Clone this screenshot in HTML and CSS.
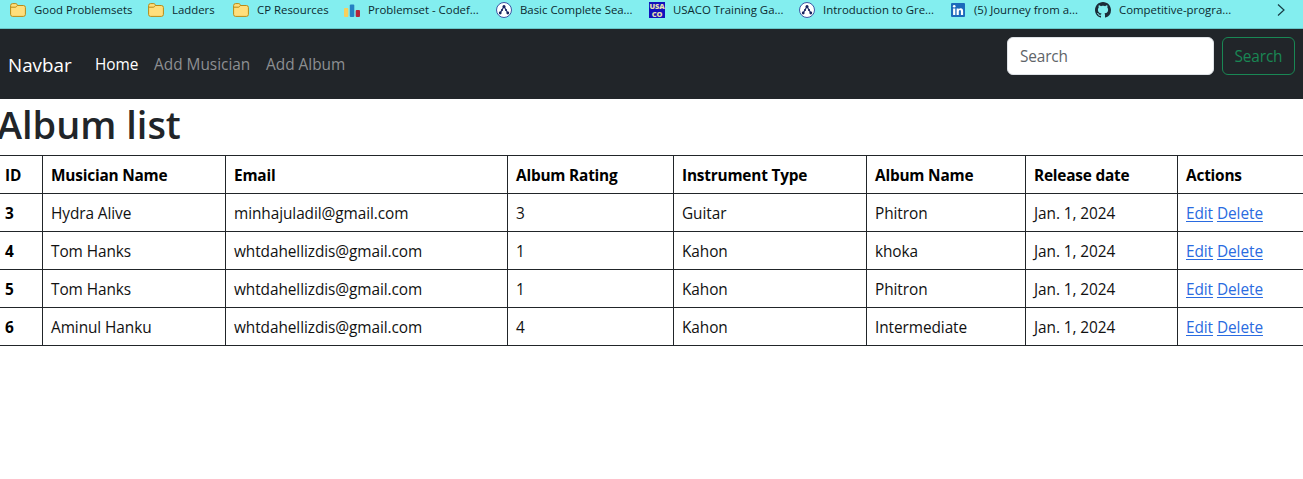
FILE: index.html
```html
<!DOCTYPE html>
<html lang="en">
<head>
<meta charset="utf-8">
<title>Album list</title>
<link rel="stylesheet" href="styles.css">
</head>
<body>
<svg class="defs" width="0" height="0">
  <symbol id="folder" viewBox="0 0 16 14"><path d="M.6 2.6q0-2 2-2h3.2q1 0 1.3 1l.3.9h6q2 0 2 2v6.900q0 2-2 2H2.600q-2 0-2-2z" fill="#ffdf7c" stroke="#b98a16"/><path d="M.8 4.200h4.400q1 0 1.500-.8l.7-.9" fill="none" stroke="#b98a16"/></symbol>
  <symbol id="graph" viewBox="0 0 16 16"><circle cx="8" cy="8" r="7.500" fill="#fff" stroke="#3d55a5"/><path d="M4.200 11 8 4.500 11.800 11" fill="none" stroke="#2b3674" stroke-width="1.300"/><g fill="#17235e"><circle cx="8" cy="4.500" r="1.500"/><circle cx="6" cy="8" r="1"/><circle cx="10" cy="8" r="1"/><circle cx="4.200" cy="11" r="1.400"/><circle cx="11.800" cy="11" r="1.400"/></g></symbol>
</svg>
<nav class="bookmarks">
  <a class="bookmark"><svg class="folder"><use href="#folder"/></svg><span>Good Problemsets</span></a>
  <a class="bookmark"><svg class="folder"><use href="#folder"/></svg><span>Ladders</span></a>
  <a class="bookmark"><svg class="folder"><use href="#folder"/></svg><span>CP Resources</span></a>
  <a class="bookmark"><svg class="icon" viewBox="0 0 16 16"><rect y="6" width="4.300" height="9" rx="1" fill="#f8cf5c"/><rect x="5.800" y="2.500" width="4.500" height="12.500" rx="1" fill="#2580c3"/><rect x="11.700" y="8" width="4.300" height="7" rx="1" fill="#b5243a"/></svg><span>Problemset - Codef...</span></a>
  <a class="bookmark"><svg class="icon"><use href="#graph"/></svg><span>Basic Complete Sea...</span></a>
  <a class="bookmark"><span class="icon usaco"><b>USA</b><b>CO</b></span><span>USACO Training Ga...</span></a>
  <a class="bookmark"><svg class="icon"><use href="#graph"/></svg><span>Introduction to Gre...</span></a>
  <a class="bookmark"><svg class="icon" viewBox="0 0 16 16"><rect x="1" y="1" width="14" height="14" rx="1" fill="#1c69bb"/><g fill="#fff"><circle cx="4.200" cy="4.200" r="1.300"/><path d="M3.100 6.400h2.200V13H3.100zM6.600 6.400h2.100v.9q.7-1.100 2.100-1.100 2.300 0 2.300 2.900V13h-2.200V9.500q0-1.400-1-1.400-1.100 0-1.100 1.500V13H6.600z"/></g></svg><span>(5) Journey from a...</span></a>
  <a class="bookmark"><svg class="icon" viewBox="0 0 16 16"><path fill="#1b2c38" d="M8 0C3.580 0 0 3.580 0 8c0 3.540 2.290 6.530 5.470 7.590.4.070.55-.17.55-.38 0-.19-.01-.82-.01-1.490-2.010.37-2.530-.49-2.690-.94-.09-.23-.48-.94-.82-1.130-.28-.15-.68-.52-.01-.53.63-.01 1.080.58 1.230.82.72 1.210 1.870.87 2.330.66.07-.52.28-.87.51-1.070-1.780-.2-3.640-.89-3.640-3.950 0-.87.31-1.590.82-2.150-.08-.2-.36-1.020.08-2.120 0 0 .67-.21 2.200.82.64-.18 1.320-.27 2-.27s1.360.09 2 .27c1.530-1.040 2.200-.82 2.200-.82.44 1.100.16 1.920.08 2.120.51.56.82 1.270.82 2.150 0 3.070-1.870 3.750-3.650 3.950.29.25.54.73.54 1.480 0 1.070-.01 1.930-.01 2.200 0 .21.15.46.55.38A8.010 8.010 0 0 0 16 8c0-4.420-3.580-8-8-8z"/></svg><span>Competitive-progra...</span></a>
  <svg class="more" viewBox="0 0 8 12"><path d="M1 .5 7 6 1 11.500" fill="none" stroke="#173c44" stroke-width="1.200"/></svg>
</nav>
<header class="navbar">
  <a class="brand">Navbar</a>
  <div class="links"><a class="active">Home</a><a class="musician">Add Musician</a><a>Add Album</a></div>
  <form class="search"><input type="search" placeholder="Search"><button type="button">Search</button></form>
</header>
<main>
  <h1>Album list</h1>
  <table>
    <colgroup><col class="c1"><col class="c2"><col class="c3"><col class="c4"><col class="c5"><col class="c6"><col class="c7"><col class="c8"></colgroup>
    <thead><tr><th>ID</th><th>Musician Name</th><th>Email</th><th>Album Rating</th><th>Instrument Type</th><th>Album Name</th><th>Release date</th><th>Actions</th></tr></thead>
    <tbody>
      <tr><th>3</th><td>Hydra Alive</td><td>minhajuladil@gmail.com</td><td>3</td><td>Guitar</td><td>Phitron</td><td>Jan. 1, 2024</td><td><a href="#">Edit</a> <a href="#">Delete</a></td></tr>
      <tr><th>4</th><td>Tom Hanks</td><td>whtdahellizdis@gmail.com</td><td>1</td><td>Kahon</td><td>khoka</td><td>Jan. 1, 2024</td><td><a href="#">Edit</a> <a href="#">Delete</a></td></tr>
      <tr><th>5</th><td>Tom Hanks</td><td>whtdahellizdis@gmail.com</td><td>1</td><td>Kahon</td><td>Phitron</td><td>Jan. 1, 2024</td><td><a href="#">Edit</a> <a href="#">Delete</a></td></tr>
      <tr><th>6</th><td>Aminul Hanku</td><td>whtdahellizdis@gmail.com</td><td>4</td><td>Kahon</td><td>Intermediate</td><td>Jan. 1, 2024</td><td><a href="#">Edit</a> <a href="#">Delete</a></td></tr>
    </tbody>
  </table>
</main>
</body>
</html>
```
FILE: styles.css
```css
* { box-sizing: border-box; }
body { margin: 0; background: #fff; color: #212529; font: 15.4px/24px "Open Sans", "Noto Sans", sans-serif; overflow: hidden; }
.defs { display: block; }
.bookmarks { display: grid; grid-template-columns: 138px 85px 111px 152px 153px 150px 151px 145px 182px 8px; height: 29px; padding: 0 0 9px 10px; align-items: center; background: #83eeef; border-bottom: 1px solid #67c5c8; color: #0b2a30; font-size: 11.4px; line-height: 18px; white-space: nowrap; }
.bookmark { display: flex; align-items: center; gap: 8px; }
.folder { width: 16px; height: 14px; }
.icon { width: 16px; height: 16px; flex: none; }
.usaco { display: flex; flex-direction: column; background: #1111bd; color: #e5dfb0; font: 700 7.5px/8px "Open Sans", sans-serif; letter-spacing: -.2px; text-align: center; }
.more { width: 8px; height: 12px; }
.navbar { display: flex; align-items: flex-start; height: 70px; padding: 8px 8px 0; background: #212529; }
.brand { width: 80px; padding-top: 13px; color: #fff; font-size: 18.8px; line-height: 30px; }
.links { display: flex; padding: 16px 0 0 7px; color: #8d8f92; }
.links a { white-space: nowrap; }
.links .active { width: 59px; color: #fff; }
.musician { width: 112px; }
.search { display: flex; gap: 8px; margin-left: auto; }
.search input { width: 207px; height: 38px; padding: 1px 12px 0; border: 1px solid #dee2e6; border-radius: 6px; background: #fff; font: inherit; letter-spacing: -.15px; }
.search input::placeholder { color: #606468; opacity: 1; }
.search button { width: 73px; height: 38px; padding: 1px 0 0; border: 1px solid #198754; border-radius: 6px; background: none; color: #198754; font: inherit; letter-spacing: -.15px; }
main { overflow: hidden; }
h1 { height: 56px; margin: 0 0 0 -3px; padding-top: 1px; font-size: 37.9px; line-height: 48px; font-weight: 600; }
table { width: 1307px; margin-left: -4px; table-layout: fixed; border-collapse: separate; border-spacing: 0; border-top: 1px solid #212529; color: #111; letter-spacing: -.08px; }
th, td { height: 38px; padding: 2px 8px 0; border-right: 1px solid #212529; border-bottom: 1px solid #212529; text-align: left; line-height: 24px; white-space: nowrap; }
th { color: #000; font-weight: 700; letter-spacing: -.2px; }
th:first-child { padding-left: 9px; }
th:last-child, td:last-child { border-right: 0; }
.c1 { width: 47px; }
.c2 { width: 183px; }
.c3 { width: 282px; }
.c4 { width: 166px; }
.c5 { width: 193px; }
.c6 { width: 159px; }
.c7 { width: 152px; }
.c8 { width: 125px; }
td a { color: #2a6be0; text-underline-offset: 2px; text-decoration-thickness: 1px; }
```
